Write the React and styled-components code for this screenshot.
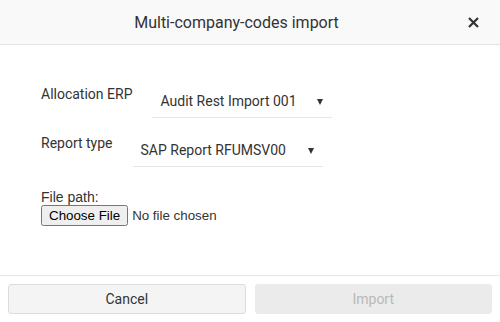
import styled, { createGlobalStyle } from "styled-components";

const GlobalStyle = createGlobalStyle`
  html, body {
    margin: 0;
    padding: 0;
    background: #fff;
  }
  body {
    font-family: Roboto, "Liberation Sans", sans-serif;
  }
`

const Dialog = styled.div`
  width: 500px;
  height: 322px;
  display: flex;
  flex-direction: column;
  background: #fff;
  color: #333;
`

const Header = styled.div`
  height: 44px;
  flex-shrink: 0;
  display: flex;
  align-items: center;
  justify-content: center;
  position: relative;
  padding-right: 27px;
  background: #f9f9f9;
  border-bottom: 1px solid #e3e3e3;
`

const Title = styled.h1`
  margin: 0;
  font-size: 16px;
  font-weight: 400;
  color: #333;
`

const CloseButton = styled.button`
  position: absolute;
  right: 20px;
  top: 15px;
  width: 14px;
  height: 14px;
  padding: 0;
  border: none;
  background: none;
  display: flex;
  align-items: center;
  justify-content: center;
  cursor: pointer;
`

const Body = styled.div`
  flex: 1;
  padding: 39px 41px 0;
  display: flex;
  flex-direction: column;
`

const FieldRow = styled.div`
  display: flex;
  align-items: flex-start;
  margin-bottom: ${p => p.$gap || 0}px;
`

const Label = styled.label`
  font-size: 14px;
  line-height: 20px;
  color: #333;
  margin-right: 20px;
`

const Select = styled.div`
  width: ${p => p.$width}px;
  box-sizing: border-box;
  margin-top: 7px;
  padding: 0 9px 0 8px;
  height: 27px;
  display: flex;
  align-items: flex-start;
  justify-content: space-between;
  border-bottom: 1px solid #e6e6e6;
  font-size: 14px;
  line-height: 20px;
  color: #333;
`

const Caret = styled.span`
  width: 0;
  height: 0;
  margin-top: 8px;
  border-left: 3.5px solid transparent;
  border-right: 3.5px solid transparent;
  border-top: 6px solid #333;
`

const FileField = styled.div`
  display: flex;
  flex-direction: column;
  font-family: Arial, "Liberation Sans", sans-serif;
  font-size: 14px;
  color: #333;
`

const FileLabel = styled.span`
  line-height: 16px;
`

const FileInput = styled.input`
  margin: 0;
  font-family: Arial, "Liberation Sans", sans-serif;
  font-size: 13.33px;
  color: #333;
`

const Footer = styled.div`
  flex-shrink: 0;
  border-top: 1px solid #e6e6e6;
  padding: 8px;
  display: grid;
  grid-template-columns: 1fr 1fr;
  gap: 9px;
`

const FooterButton = styled.button`
  height: 30px;
  border-radius: 3px;
  border: 1px solid ${p => (p.disabled ? "#ebebeb" : "#dcdcdc")};
  background: ${p => (p.disabled ? "#ebebeb" : "#f4f4f4")};
  color: ${p => (p.disabled ? "#b9b9b9" : "#333")};
  font-family: Roboto, "Liberation Sans", sans-serif;
  font-size: 14px;
  cursor: ${p => (p.disabled ? "default" : "pointer")};
`

const App = () => {
    return (
        <>
            <GlobalStyle />
            <Dialog>
                <Header>
                    <Title>Multi-company-codes import</Title>
                    <CloseButton aria-label="Close">
                        <svg width="11" height="11" viewBox="0 0 11 11">
                            <path d="M1 1 L10 10 M10 1 L1 10" stroke="#333" strokeWidth="2.2" />
                        </svg>
                    </CloseButton>
                </Header>

                <Body>
                    <FieldRow $gap={15}>
                        <Label>Allocation ERP</Label>
                        <Select $width={180}>
                            Audit Rest Import 001
                            <Caret />
                        </Select>
                    </FieldRow>
                    <FieldRow $gap={22}>
                        <Label>Report type</Label>
                        <Select $width={190}>
                            SAP Report RFUMSV00
                            <Caret />
                        </Select>
                    </FieldRow>
                    <FileField>
                        <FileLabel>File path:</FileLabel>
                        <FileInput type="file" />
                    </FileField>
                </Body>

                <Footer>
                    <FooterButton>Cancel</FooterButton>
                    <FooterButton disabled>Import</FooterButton>
                </Footer>
            </Dialog>
        </>
    );
}

export default App;
